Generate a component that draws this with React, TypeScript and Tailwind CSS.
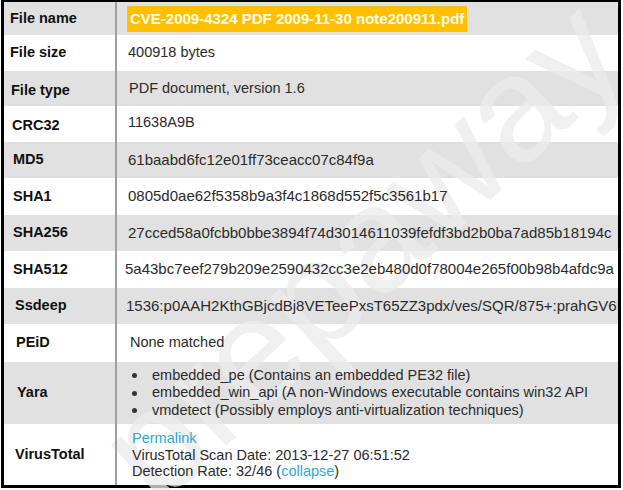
import React from "react";

type Row = {
  label: string;
  h: string;
  bg: string;
  lpl: string;
  lpt?: string;
  vpl: string;
  value: React.ReactNode;
};

const F = { fontFamily: '"Liberation Sans", Arial, sans-serif' };

const rows: Row[] = [
  {
    label: "File name",
    h: "h-[33px]",
    bg: "bg-[#e1e1e1]",
    lpl: "pl-[6px]",
    vpl: "pl-[10px]",
    value: (
      <span className="inline-block h-[26px] leading-[26px] px-[3px] bg-[#ffc000] text-[#fffbea] font-bold text-[15px] whitespace-nowrap">
        CVE-2009-4324 PDF 2009-11-30 note200911.pdf
      </span>
    ),
  },
  {
    label: "File size",
    h: "h-[36px]",
    bg: "bg-white",
    lpl: "pl-[6px]",
    vpl: "pl-[11px]",
    value: <span className="text-[14.5px]">400918 bytes</span>,
  },
  {
    label: "File type",
    h: "h-[35px]",
    bg: "bg-[#e1e1e1]",
    lpl: "pl-[7px]",
    lpt: "pt-[4px]",
    vpl: "pl-[12px]",
    value: <span className="text-[14.5px]">PDF document, version 1.6</span>,
  },
  {
    label: "CRC32",
    h: "h-[36px]",
    bg: "bg-white",
    lpl: "pl-[8px]",
    lpt: "pt-[3px]",
    vpl: "pl-[11px]",
    value: <span className="text-[14.5px] -mt-[3px]">11638A9B</span>,
  },
  {
    label: "MD5",
    h: "h-[36px]",
    bg: "bg-[#e1e1e1]",
    lpl: "pl-[9px]",
    vpl: "pl-[11px]",
    value: <span className="text-[15px]">61baabd6fc12e01ff73ceacc07c84f9a</span>,
  },
  {
    label: "SHA1",
    h: "h-[37px]",
    bg: "bg-white",
    lpl: "pl-[9px]",
    vpl: "pl-[11px]",
    value: <span className="text-[15px]">0805d0ae62f5358b9a3f4c1868d552f5c3561b17</span>,
  },
  {
    label: "SHA256",
    h: "h-[36px]",
    bg: "bg-[#e1e1e1]",
    lpl: "pl-[9px]",
    vpl: "pl-[11px]",
    value: (
      <span className="text-[15px]">27cced58a0fcbb0bbe3894f74d3014611039fefdf3bd2b0ba7ad85b18194c</span>
    ),
  },
  {
    label: "SHA512",
    h: "h-[37px]",
    bg: "bg-white",
    lpl: "pl-[9px]",
    vpl: "pl-[8px]",
    value: (
      <span className="text-[15px]">5a43bc7eef279b209e2590432cc3e2eb480d0f78004e265f00b98b4afdc9a</span>
    ),
  },
  {
    label: "Ssdeep",
    h: "h-[36px]",
    bg: "bg-[#e1e1e1]",
    lpl: "pl-[11px]",
    vpl: "pl-[9px]",
    value: (
      <span className="text-[15px]">1536:p0AAH2KthGBjcdBj8VETeePxsT65ZZ3pdx/ves/SQR/875+:prahGV6B</span>
    ),
  },
  {
    label: "PEiD",
    h: "h-[38px]",
    bg: "bg-white",
    lpl: "pl-[12px]",
    vpl: "pl-[13px]",
    value: <span className="text-[14.5px]">None matched</span>,
  },
  {
    label: "Yara",
    h: "h-[62px]",
    bg: "bg-[#e1e1e1]",
    lpl: "pl-[13px]",
    vpl: "pl-[15px]",
    value: (
      <ul className="text-[14.5px] leading-[17.5px] flex flex-col">
        {[
          "embedded_pe (Contains an embedded PE32 file)",
          "embedded_win_api (A non-Windows executable contains win32 API",
          "vmdetect (Possibly employs anti-virtualization techniques)",
        ].map((t) => (
          <li key={t} className="flex items-center whitespace-nowrap">
            <span className="w-[5px] h-[5px] rounded-full bg-[#333] mr-[15px]" />
            {t}
          </li>
        ))}
      </ul>
    ),
  },
  {
    label: "VirusTotal",
    h: "h-[61px]",
    bg: "bg-white",
    lpl: "pl-[11px]",
    vpl: "pl-[15px]",
    value: (
      <div className="text-[14.5px] leading-[16.5px] flex flex-col pt-[1px]">
        <span className="text-[#2fa9d6]">Permalink</span>
        <span>VirusTotal Scan Date: 2013-12-27 06:51:52</span>
        <span>
          Detection Rate: 32/46 (<span className="text-[#2fa9d6]">collapse</span>)
        </span>
      </div>
    ),
  },
];

export default function App() {
  return (
    <div className="w-[623px] h-[490px] bg-white relative overflow-hidden" style={F}>
      <div className="ml-[1px] w-[620px] border-[3px] border-t-2 border-black flex flex-col">
        {rows.map((r) => (
          <div key={r.label} className={`flex ${r.h} ${r.bg}`}>
            <div
              className={`relative z-[2] w-[111px] shrink-0 flex items-center ${r.lpl} ${r.lpt ?? ""} font-bold text-[14.5px] text-[#111]`}
            >
              {r.label}
            </div>
            <div className="relative z-[2] w-[2px] bg-[#9e9e9e] shrink-0" />
            <div
              className={`relative z-[2] flex-1 min-w-0 overflow-hidden flex items-center whitespace-nowrap ${r.vpl} text-[#2b2b2b]`}
            >
              {r.value}
            </div>
          </div>
        ))}
      </div>
      <div
        className="absolute z-[1] left-[35px] top-[175px] text-[150px] leading-none text-[#ebebeb]/75 pointer-events-none select-none whitespace-nowrap"
        style={{ transform: "rotate(-43deg)", transformOrigin: "center" }}
      >
        prepaway
      </div>
    </div>
  );
}
